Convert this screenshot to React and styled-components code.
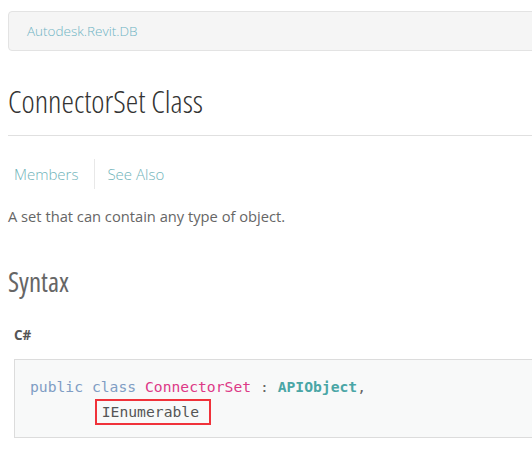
import React from "react";
import styled, { createGlobalStyle } from "styled-components";

const Global = createGlobalStyle`
  body {
    margin: 0;
    overflow: hidden;
    background: #fff;
    font-family: "Open Sans", "Noto Sans", sans-serif;
  }
`;

const Page = styled.div`
  width: 760px;
  padding: 11px 0 0 8px;
`;

const Breadcrumb = styled.div`
  height: 38px;
  display: flex;
  align-items: center;
  padding: 0 18px;
  background: #f5f5f5;
  border: 1px solid #e3e3e3;
  border-radius: 4px;
  font-size: 13.5px;
  font-weight: 300;
  color: #6fb4c4;
`;

const Title = styled.h1`
  margin: 32px 0 0;
  font-size: 31.5px;
  line-height: 36px;
  font-weight: 300;
  font-stretch: 75%;
  color: #333;
`;

const Rule = styled.hr`
  margin: 16px 0 0;
  border: 0;
  border-top: 1px solid #e0e0e0;
`;

const Tabs = styled.nav`
  display: flex;
  align-items: center;
  margin-top: 23px;
  height: 30px;
`;

const Tab = styled.a`
  font-size: 15px;
  font-weight: 300;
  color: #6fb3b9;
  text-decoration: none;
  padding: ${(p) => (p.$first ? "0 16px 0 6px" : "0 12px")};
  line-height: 30px;
  border-left: ${(p) => (p.$first ? "none" : "1px solid #e8e8e8")};
`;

const Summary = styled.p`
  margin: 17px 0 0;
  font-size: 14.7px;
  line-height: 20px;
  color: #666;
`;

const Heading = styled.h2`
  margin: 40px 0 0;
  font-size: 27px;
  line-height: 32px;
  font-weight: 400;
  font-stretch: 87.5%;
  color: #666;
`;

const Lang = styled.h4`
  margin: 28px 0 0 6px;
  font-size: 13.5px;
  line-height: 18px;
  font-weight: 700;
  color: #555;
`;

const Code = styled.pre`
  margin: 15px 0 0 6px;
  padding: 15px 15px 12px;
  background: #f8f9f9;
  border: 1px solid #dcdcdc;
  font-family: "DejaVu Sans Mono", "Liberation Mono", monospace;
  font-size: 14.7px;
  line-height: 24px;
  color: #666;
`;

const Tok = styled.span`
  color: ${(p) => p.$c};
  font-weight: ${(p) => (p.$bold ? 700 : 400)};
`;

const Marked = styled.span`
  display: inline-block;
  margin-left: -6px;
  padding: 0 10px 0 5px;
  line-height: 22px;
  border: 2px solid #f0323a;
  color: #555;
`;

export default function App() {
  return (
    <>
      <Global />
      <Page>
        <Breadcrumb>Autodesk.Revit.DB</Breadcrumb>
        <Title>ConnectorSet Class</Title>
        <Rule />
        <Tabs>
          <Tab $first href="#">Members</Tab>
          <Tab href="#">See Also</Tab>
        </Tabs>
        <Summary>A set that can contain any type of object.</Summary>
        <Heading>Syntax</Heading>
        <Lang>C#</Lang>
        <Code>
          <Tok $c="#7f9dc4">public</Tok> <Tok $c="#7f9dc4">class</Tok>{" "}
          <Tok $c="#dd3a87">ConnectorSet</Tok> : <Tok $c="#4aa6a6" $bold>APIObject</Tok>,
          {"\n        "}
          <Marked>IEnumerable</Marked>
        </Code>
      </Page>
    </>
  );
}
